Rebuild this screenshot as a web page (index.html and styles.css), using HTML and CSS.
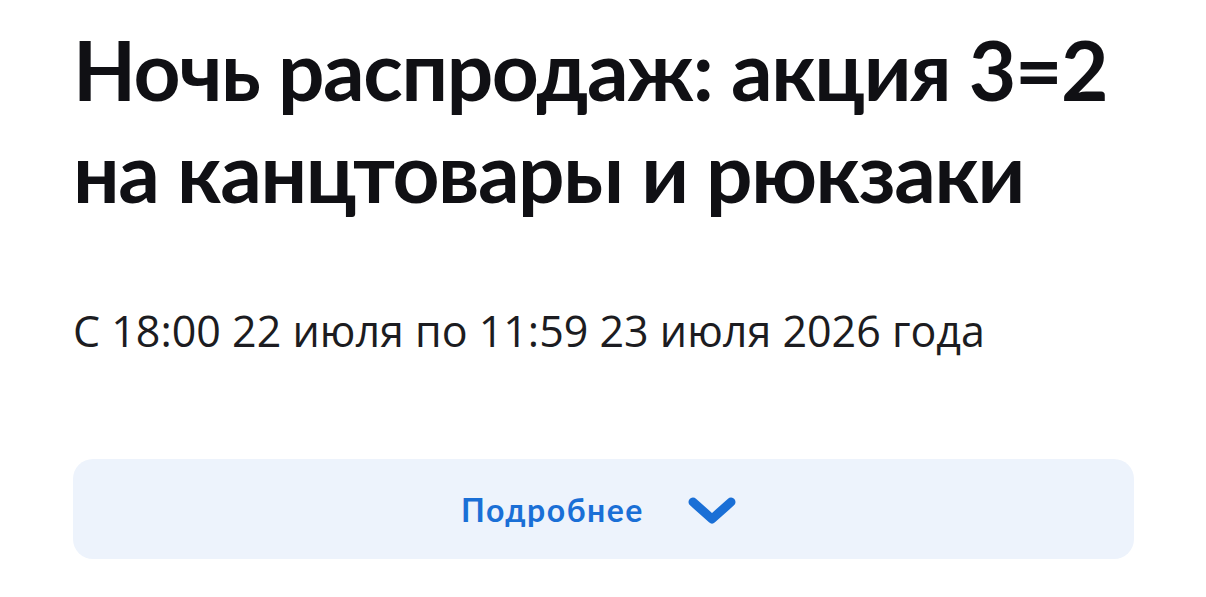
FILE: index.html
```html
<!DOCTYPE html>
<html lang="ru">

<head>
    <meta charset="UTF-8">
    <title>Ночь распродаж</title>

    <link rel="stylesheet" href="styles.css">

</head>

<body>
    <div class="promo">
        <h1 class="promo-title">Ночь распродаж: акция 3=2<br>на канцтовары и рюкзаки</h1>

        <p class="promo-dates">С 18:00 22 июля по 11:59 23 июля 2026 года</p>

        <button class="more-btn" type="button">
            <span>Подробнее</span>
            <svg class="chevron" viewBox="0 0 48 28" width="48" height="28">
                <path d="M5 5 L24 22 L43 5" fill="none" stroke="currentColor" stroke-width="9" stroke-linecap="round" stroke-linejoin="round" />
            </svg>
        </button>
    </div>
</body>

</html>
```

FILE: styles.css
```css
body {
    margin: 0;
    background: #fff;
    font-family: "Lato", "Noto Sans", sans-serif;
    color: #101014;
}

.promo {
    width: 1061px;
    padding: 18px 0 0 73px;
}

.promo-title {
    margin: 0;
    font-size: 82px;
    font-weight: 700;
    line-height: 102px;
    letter-spacing: -1.4px;
    white-space: nowrap;
}

.promo-dates {
    margin: 79px 0 0;
    font-family: "Open Sans", sans-serif;
    font-size: 43px;
    font-weight: 400;
    color: #1c1c21;
    white-space: nowrap;
}

.more-btn {
    display: flex;
    align-items: center;
    justify-content: center;
    gap: 44px;
    width: 100%;
    height: 100px;
    margin-top: 99px;
    padding: 0 10px 0 0;
    border: 0;
    border-radius: 20px;
    background: #edf3fc;
    color: #1a6fd6;
    font-family: "Lato", sans-serif;
    font-size: 32px;
    font-weight: 700;
    letter-spacing: 1.5px;
    cursor: pointer;
}

.chevron {
    display: block;
    margin-top: 4px;
}
```
